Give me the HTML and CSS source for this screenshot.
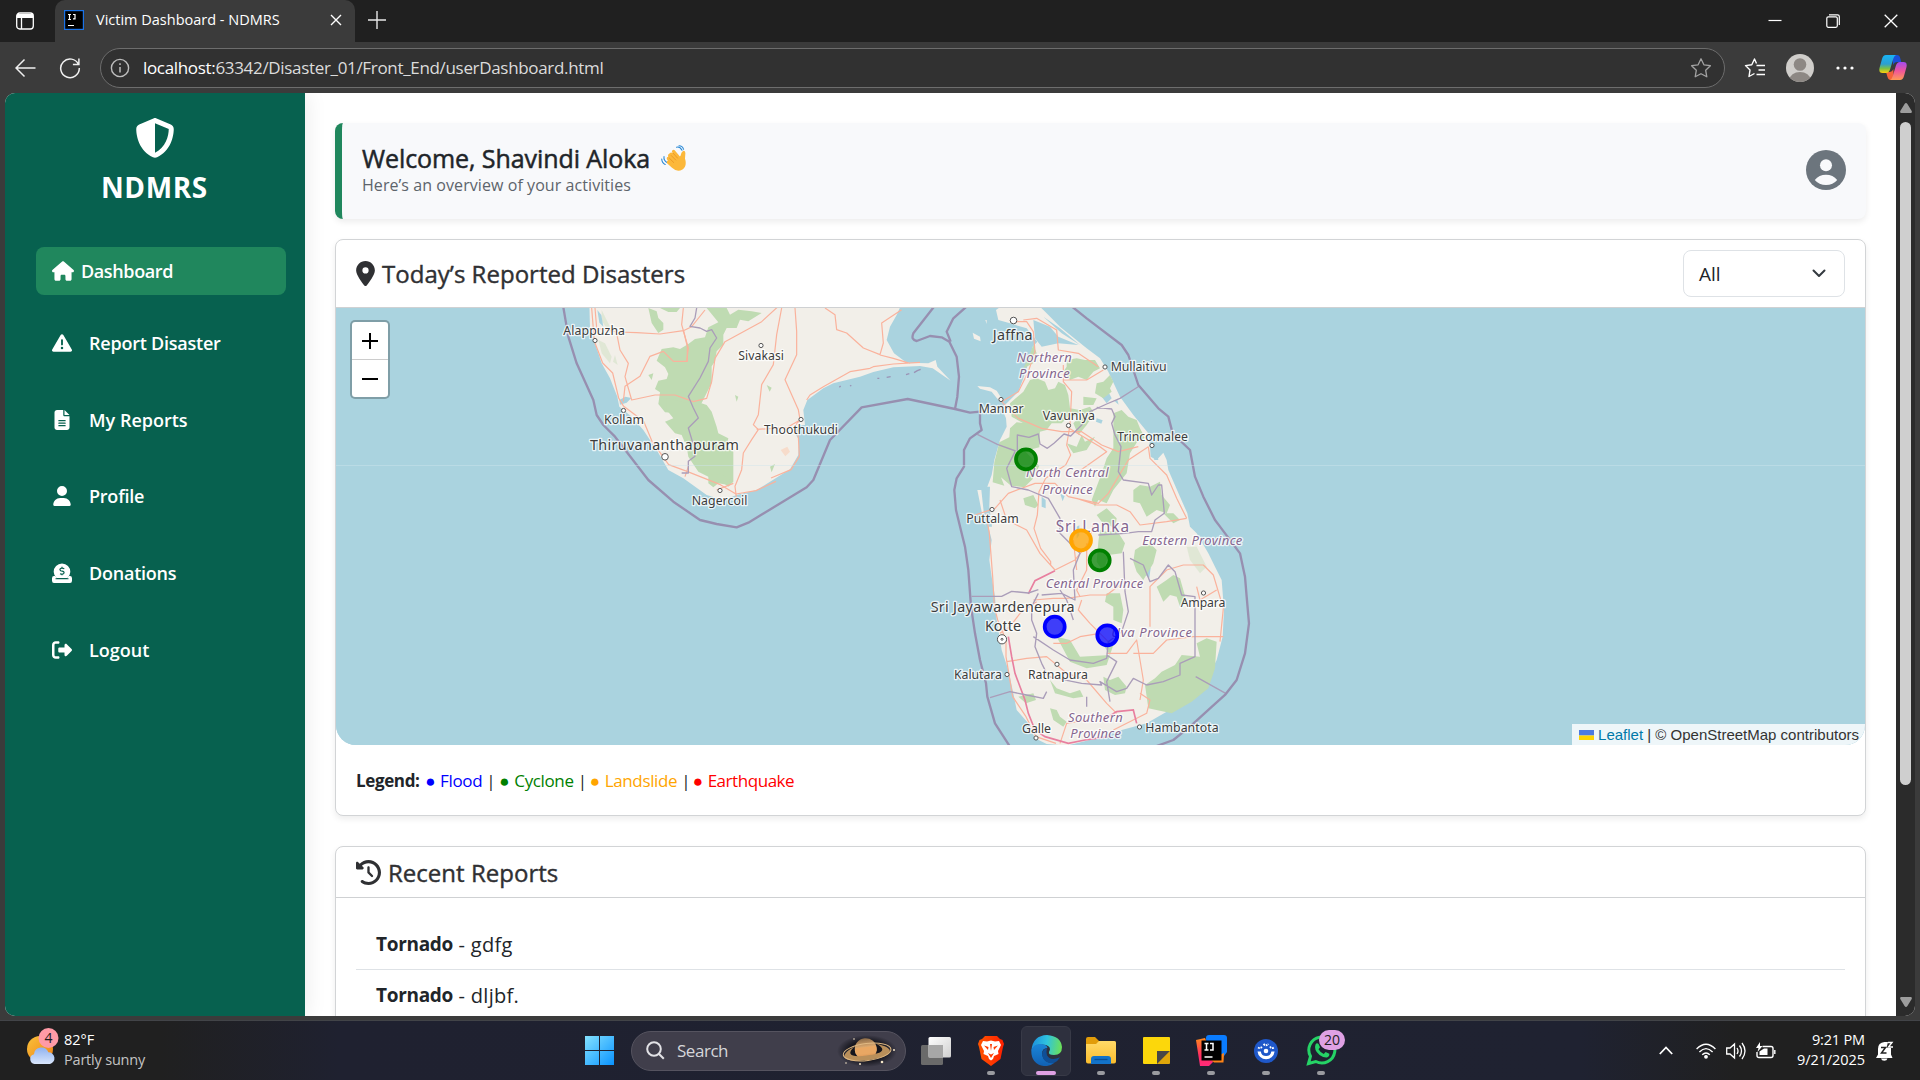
FILE: index.html
```html
<!DOCTYPE html>
<html lang="en">
<head>
<meta charset="utf-8">
<title>Victim Dashboard - NDMRS</title>
<link rel="stylesheet" href="styles.css">
</head>
<body>
<div class="tabbar">
  <svg class="tab-menu" width="20" height="20" viewBox="0 0 20 20" fill="none" stroke="#fff" stroke-width="1.3"><rect x="1.7" y="2" width="16.6" height="16" rx="3"/><path d="M2 5h16" stroke-width="4"/><path d="M6.5 6v12"/></svg>
  <div class="tab">
    <svg width="20" height="20" viewBox="0 0 20 20"><rect x=".6" y=".6" width="18.8" height="18.8" fill="#000" stroke="#1a73e8" stroke-width="1.2"/><path d="M4 4.500h3M5.500 4.500v5M4 9.500h3M9 4.500h2v4.300h-2M4 15.500h6" stroke="#fff" stroke-width="1.200" fill="none"/></svg>
    <span class="tab-title">Victim Dashboard - NDMRS</span>
    <svg class="tab-close" width="12" height="12" viewBox="0 0 12 12" stroke="#fff" stroke-width="1.4"><path d="M1 1l10 10M11 1L1 11"/></svg>
  </div>
  <svg class="tab-new" width="18" height="18" viewBox="0 0 18 18" stroke="#e8e8e8" stroke-width="1.4"><path d="M9 0v18M0 9h18"/></svg>
  <div class="window-buttons">
    <svg width="14" height="14" viewBox="0 0 14 14" stroke="#fff" stroke-width="1.2"><path d="M.5 6.500h13"/></svg>
    <svg width="14" height="14" viewBox="0 0 14 14" fill="none" stroke="#fff" stroke-width="1.2"><rect x=".8" y="2.800" width="10.500" height="10.500" rx="1.500"/><path d="M3 .8h8.500q1.800 0 1.800 1.800V11"/></svg>
    <svg width="14" height="14" viewBox="0 0 14 14" stroke="#fff" stroke-width="1.3"><path d="M.7.7l12.600 12.600M13.300.7L.7 13.300"/></svg>
  </div>
</div>
<div class="toolbar">
  <svg width="21" height="20" viewBox="0 0 21 20" fill="none" stroke="#f0f0f0" stroke-width="1.500"><path d="M20.500 10H1M9.500 1.500L1 10l8.500 8.500"/></svg>
  <svg class="reload" width="22" height="22" viewBox="0 0 22 22" fill="none" stroke="#f0f0f0" stroke-width="1.500"><path d="M19.500 7.500A9.300 9.300 0 1 0 20.300 11M19.900 1.500v6h-6"/></svg>
  <div class="address">
    <svg width="20" height="20" viewBox="0 0 20 20" fill="none" stroke="#bdbdbd" stroke-width="1.400"><circle cx="10" cy="10" r="8.600"/><path d="M10 9v5.500M10 5.300v1.800" stroke-width="1.500"/></svg>
    <span class="url"><b>localhost:</b>63342/Disaster_01/Front_End/userDashboard.html</span>
    <svg class="fav" width="22" height="22" viewBox="0 0 22 22" fill="none" stroke="#a3a3a3" stroke-width="1.300" stroke-linejoin="round"><path d="M11 1.800l2.900 6 6.500.9-4.700 4.600 1.100 6.500L11 16.700l-5.800 3.100 1.100-6.500L1.600 8.700l6.500-.9z"/></svg>
  </div>
  <svg class="fav-list" width="22" height="22" viewBox="0 0 22 22" fill="none" stroke="#fff" stroke-width="1.400" stroke-linejoin="round"><path d="M12.500 6.500L10.500 2 7.800 7.700l-6.300.9 4.500 4.500-1 6.400L10.500 16.500M12.500 8.500H21M14.500 13H21M12.500 17.500H21"/></svg>
  <svg class="profile" width="28" height="28" viewBox="0 0 28 28"><clipPath id="pc"><circle cx="14" cy="14" r="14"/></clipPath><g clip-path="url(#pc)"><rect width="28" height="28" fill="#d0cecb"/><circle cx="14" cy="10.500" r="6.300" fill="#8d8884"/><ellipse cx="14" cy="26" rx="10.500" ry="8" fill="#8d8884"/></g></svg>
  <svg class="more" width="18" height="4" viewBox="0 0 18 4" fill="#fff"><circle cx="2" cy="2" r="1.600"/><circle cx="9" cy="2" r="1.600"/><circle cx="16" cy="2" r="1.600"/></svg>
  <svg class="copilot" width="28" height="27" viewBox="0 0 28 27"><defs><linearGradient id="cpa" x1="0" y1="0" x2="0" y2="1"><stop offset="0" stop-color="#18b4f5"/><stop offset=".5" stop-color="#2c9fd0"/><stop offset=".75" stop-color="#7cc144"/><stop offset="1" stop-color="#ffd00b"/></linearGradient><linearGradient id="cpb" x1="0" y1="0" x2="0" y2="1"><stop offset="0" stop-color="#a34bf0"/><stop offset=".5" stop-color="#f0559b"/><stop offset="1" stop-color="#ff9a55"/></linearGradient></defs><path d="M13 1h5q2.500 0 3.200 3l1 4h-4q-3 0-4 3z" fill="#1a4fd8"/><path d="M7 18l3.300 0q3 0 4-3l.5 11h-3q-2.500 0-3.300-3z" fill="#f4633a"/><path d="M7 1h10q-2 1-2.800 4l-3 10q-1.200 4-4.200 4H3.500Q-.5 19 .5 14L3 5q1-4 4-4z" fill="url(#cpa)"/><path d="M21 26H11q2-1 2.800-4l3-10q1.200-4 4.200-4h3.500q4 0 3 5l-2.500 9q-1 4-4 4z" fill="url(#cpb)"/></svg>
</div>

<div class="webview">
  <nav class="sidebar">
    <svg class="brand-icon" width="40" height="40" viewBox="0 0 512 512" fill="#fff"><path d="M256 0c4.600 0 9.200 1 13.400 2.900L457.700 82.800c22 9.300 38.400 31 38.300 57.200c-.5 99.200-41.300 280.700-213.600 363.200c-16.700 8-36.100 8-52.800 0C57.300 420.700 16.500 239.200 16 140c-.1-26.200 16.300-47.900 38.300-57.200L242.700 2.900C246.800 1 251.400 0 256 0zm0 66.800V444.800C394 378 431.100 230.100 432 141.400L256 66.800z"/></svg>
    <div class="brand">NDMRS</div>
    <a class="nav-item active"><svg width="22" height="20" viewBox="0 0 576 512"><path d="M575.800 255.500c0 18-15 32.100-32 32.100h-32l.7 160.200c0 2.700-.2 5.400-.5 8.100V472c0 22.100-17.900 40-40 40H392c-22.100 0-40-17.900-40-40V384c0-17.700-14.300-32-32-32H256c-17.700 0-32 14.300-32 32v88c0 22.100-17.900 40-40 40H104c-22.100 0-40-17.900-40-40V287.600H32c-18 0-32-14-32-32.100c0-9 3-17 10-24L266.400 8c7-7 15-8 22-8s15 2 21 7L564.800 231.500c8 7 12 15 11 24z"/></svg><span>Dashboard</span></a>
    <a class="nav-item"><svg width="20" height="20" viewBox="0 0 512 512"><path d="M256 32c14.200 0 27.300 7.500 34.500 19.800l216 368c7.300 12.400 7.300 27.700 .2 40.100S486.300 480 472 480H40c-14.300 0-27.600-7.700-34.700-20.100s-7-27.800 .2-40.100l216-368C228.700 39.500 241.800 32 256 32zm0 128c-13.300 0-24 10.700-24 24V296c0 13.300 10.700 24 24 24s24-10.700 24-24V184c0-13.300-10.700-24-24-24zm32 224a32 32 0 1 0 -64 0 32 32 0 1 0 64 0z"/></svg><span>Report Disaster</span></a>
    <a class="nav-item"><svg width="20" height="20" viewBox="-64 0 512 512"><path d="M64 0C28.700 0 0 28.700 0 64V448c0 35.300 28.700 64 64 64H320c35.300 0 64-28.700 64-64V160H256c-17.700 0-32-14.300-32-32V0H64zM256 0V128H384L256 0zM112 256H272c8.800 0 16 7.200 16 16s-7.200 16-16 16H112c-8.800 0-16-7.200-16-16s7.200-16 16-16zm0 64H272c8.800 0 16 7.200 16 16s-7.200 16-16 16H112c-8.800 0-16-7.200-16-16s7.200-16 16-16zm0 64H272c8.800 0 16 7.200 16 16s-7.200 16-16 16H112c-8.800 0-16-7.200-16-16s7.200-16 16-16z"/></svg><span class="even">My Reports</span></a>
    <a class="nav-item"><svg width="20" height="20" viewBox="-32 0 512 512"><path d="M224 256A128 128 0 1 0 224 0a128 128 0 1 0 0 256zm-45.700 48C79.800 304 0 383.800 0 482.300C0 498.700 13.300 512 29.700 512H418.300c16.400 0 29.700-13.300 29.700-29.700C448 383.800 368.200 304 269.700 304H178.300z"/></svg><span>Profile</span></a>
    <a class="nav-item"><svg width="20" height="20" viewBox="0 0 20 20"><path d="M4.500 15A8.300 8.300 0 1 1 15.500 15z"/><path d="M0 15.200Q0 13 2 13h1.300l1.400 2.200H3.500v1h13v-1h-1.200l1.400-2.200H18q2 0 2 2.200v2.600Q20 20 18 20H2q-2 0-2-2.200z"/><path d="M12.300 5.700Q10 4.700 8.600 5.500T8.700 7.700l2.300.7q1.700.8.700 2.100T8 10.700M10 3.800v1.300M10 11v1.300" fill="none" stroke="#07614f" stroke-width="1.200"/></svg><span>Donations</span></a>
    <a class="nav-item"><svg width="20" height="20" viewBox="0 0 512 512"><path d="M377.900 105.900L500.700 228.700c7.200 7.200 11.300 17.100 11.300 27.300s-4.100 20.100-11.300 27.300L377.900 406.100c-6.400 6.400-15 9.900-24 9.900c-18.700 0-33.900-15.200-33.900-33.900l0-62.100-128 0c-17.700 0-32-14.300-32-32l0-64c0-17.700 14.300-32 32-32l128 0 0-62.100c0-18.700 15.200-33.900 33.900-33.900c9 0 17.600 3.600 24 9.900zM160 96L96 96c-17.700 0-32 14.300-32 32l0 256c0 17.700 14.300 32 32 32l64 0c17.700 0 32 14.300 32 32s-14.300 32-32 32l-64 0c-53 0-96-43-96-96L0 128C0 75 43 32 96 32l64 0c17.700 0 32 14.300 32 32s-14.300 32-32 32z"/></svg><span class="even">Logout</span></a>
  </nav>
  <main class="content">
    <section class="welcome">
      <div>
        <h1><span>Welcome, Shavindi Aloka</span>
          <svg width="26" height="26" viewBox="0 0 26 26"><g fill="none" stroke="#2b8ad6" stroke-width="1.100" stroke-linecap="round"><path d="M15.500 2.200q3.500-.8 5.500 3M18 .8q3.500 0 4.600 3.500M3 11.500q-.5 4 3 6M.7 14q.3 4 3.500 5.500"/></g><path d="M8.500 8.500q1.500-2 3.200-.3l-.9-1.700q.6-2.400 2.900-1.300l4.600 5.600q.4 1.100 1.200 0 .6-3.700 2.700-5 2.200 0 2.200 2.200l-.4 5.500q2.300 7.500-2.500 11-5.500 3-10.500-1.700L6 18.200q-.8-2 .9-2.400L6 14.500q-.9-2.200 1.200-2.800L7 10.500q.1-1.400 1.500-2z" fill="#fcb83a"/><path d="M10 10.300l5 5M8.200 13l4.800 4.800M12 8l4.800 5.400" stroke="#e58e1c" stroke-width=".7"/></svg></h1>
        <p class="sub">Here’s an overview of your activities</p>
      </div>
      <svg class="account" width="40" height="40" viewBox="0 0 40 40"><circle cx="20" cy="20" r="20" fill="#6c757d"/><circle cx="20" cy="15.300" r="6" fill="#f8f9fb"/><path d="M8.800 30Q13 24.800 20 24.800T31.200 30Q27 35 20 35T8.800 30z" fill="#f8f9fb"/></svg>
    </section>

    <section class="card">
      <header class="card-head map-head">
        <svg width="19" height="25" viewBox="0 0 384 512" fill="#2f3033"><path d="M215.700 499.200C267 435 384 279.400 384 192C384 86 298 0 192 0S0 86 0 192c0 87.400 117 243 168.300 307.200c12.300 15.300 35.100 15.300 47.400 0zM192 128a64 64 0 1 1 0 128 64 64 0 1 1 0-128z"/></svg>
        <h2>Today’s Reported Disasters</h2>
        <div class="select"><span>All</span><svg width="14" height="9" viewBox="0 0 14 9" fill="none" stroke="#343a40" stroke-width="2" stroke-linecap="round" stroke-linejoin="round"><path d="M1.500 1.500L7 7l5.500-5.500"/></svg></div>
      </header>
      <div class="map">
        <svg class="map-canvas" width="1529" height="437" viewBox="336 308 1529 437">
          <rect x="336" y="308" width="1529" height="437" fill="#aad3df"/>
          <!-- southern India -->
          <g transform="translate(540 300) scale(.33333)">
            <path class="land" d="M148 0L150 90 165 130 185 190 210 235 232 290 238 320 275 350 310 390 350 450 385 510 430 535 500 585 550 600 590 585 650 570 690 545 750 508 775 465 777 420 765 400 775 375 795 375 790 330 802 300 850 265 880 250 960 230 1000 216 1060 202 1140 198 1178 205 1232 242 1192 200 1187 180 1165 190 1100 188 1062 160 1040 120 1050 80 1070 45 1090 0z"/>
            <g class="forest">
              <path d="M325 24l25 10 5 20 15 15 0 20-15 10-20-30zM360 24l60 0-10 12-25 0zM500 24l60 0 10 20 25-15 40 5 30 5-40 25-25-5-10 25-30 0-10 20 0 30-20 20-5 30-10 15 0 50-30 60-40 45-20 0-20-15-30-2-20-25 5-35-15-10 10-25 25-5 5-15-10-20-25-20 15-35 35-5 20 5 25-15 20-15 30-5 10-30 30-15z"/>
              <path d="M380 295l60 15 15-10 45 15 15 20 15 45 5 20 30 15-5 25 20 15 0 90-15 15-25-20-35-10-30-15-30-45-5-30-15-35-20-5-30-35 25-10-20-25z"/>
              <path d="M505 520l20 5 15-5 30 20-5 15-30-5-15 12-15-12zM325 225l15-5-5 20zM585 285l10 5-5 15zM680 255l15 8-6 12zM690 500l15-8-10 25z"/>
              <path d="M175 120l20 10 20 40-5 20-25-30zM185 30l25 50 15 15-20-3-20-30zM225 165l8 30-14-10z" opacity=".35"/>
            </g>
            <path class="road" d="M430 90l12 50 0 45"/>
            <path d="M722 450l20-10 8 15-14 14z" fill="#f7dccb"/>
            <path d="M238 300l18-10 18 4-14 14-20 6zM172 30l12 15 6 35-12-12z" fill="#aad3df"/>
            <g class="road">
              <path d="M155 24l8 100 25 65 30 30 18 75 15 25 60 45 25 60 50 70 55 20 100 40 47 28 60-10 60-28"/>
              <path d="M165 24l5 60 60 12 60 2 70 4 70-10 25-12 40-50M430 24l-5 50 20 70-5 40-40 0-30-30-40 15-30 60-45 30-5 45M230 100l10 50 25 40-10 40 20 70 70-15 60 0 55 20 40-10 15-50 10-70 30-50 110-60 65-60 25-20"/>
              <path d="M725 24l-15 80-10 90-35 60-10 90-15 30 15 15-20 30-25 40-5 50-20 50 5 40M765 24l5 70 0 70-35 75 40 90 5 30-15 20 10 30 3 60-25 40-60 25M650 388l90-5 35-20M800 300l10-15 40-25 80-45 60-10 10-5 60-8 80-5M855 24l30 20 5 45 30 10 50 45 50 20 10-35-5-60 60-40M1020 165l40 10 50 15M435 530l10-30 0 0M530 570l50-20"/>
            </g>
            <path class="prov" d="M470 24l-5 30-15 25 30 5 20 10 15-5 15 25-20 30-5 40-25 50-35 55 15 35 15 30-30 30 15 50 5 35-20 15 0 35-20 0"/>
            <path class="isle" d="M898 262l4-4M930 258l4-2M1012 235l6 0M1040 232l12-2M1098 224l10-3M1122 218l10-6 10-4"/>
          </g>
          <!-- Sri Lanka -->
          <g transform="translate(900 300) scale(.33333)">
            <path class="land" d="M288 30L330 0 400 0 440 40 480 80 560 145 600 175 625 215 660 290 700 345 745 400 750 440 752 470 770 480 790 458 800 480 805 510 840 590 862 640 870 680 890 700 925 760 945 800 965 840 972 930 968 1010 950 1080 915 1150 860 1200 800 1235 740 1270 640 1297 560 1322 500 1337 440 1332 405 1315 385 1270 350 1230 340 1180 325 1110 305 1050 290 960 285 890 275 830 268 780 275 720 265 680 258 630 262 560 275 525 283 480 300 420 320 380 318 355 305 325 355 275 370 235 385 190 398 140 412 125 380 85 330 70 295 60z"/>
            <path class="land" d="M232 258L270 262 290 272 308 300 300 306 275 275 240 266zM218 98l22 12 2 14-20-8zM232 570l12 0 12 110-10-40zM256 60l4 0 0 12z"/>
            <path class="water" d="M400 60l50 20 25 30 60 25-60-5-50 10-20-25zM430 50l50 35 60 50-55-35zM605 290l20-15 10 20-15 15zM258 560l12 0-2 60 8 60-10 0-10-50zM755 450l15 0 5 30-12 0zM640 300l12 0 4 14zM425 590l12 10 0 25-12-5zM480 580l14 8-6 16zM530 680l8-4 0 30-8 10zM738 800l14 4-4 30-12-10zM590 355l18 6-4 10-16-6z"/>
            <g class="forest">
              <path d="M400 135l10 25-10 30-30 15 15-30z"/>
              <path d="M500 180l30-5 25 5 30 0 15 25-20 10-20 25-25-10-25 10-20-25 10-15zM370 275l20-35 20-5 25 10 10 25 20-5 10-20 20 10 10 30 5 40 30 5-10 20-20-5-25 25-30 0-15 20-20 5-40-5-10-20-35-20-5-40zM590 250l20-5 20-20 10 20-10 20 5 10-25 20-25-15zM550 290l40 5-10 20-30 0zM540 330l30-10 10 15-30 20z"/>
              <path d="M330 385l20-18 50 5 20 20-2 50-20 5-20 10 40 40-20 40-25 25-40-5-30-25 10 25-35-10 5-60 15-60 30-15z"/>
              <path d="M500 430l30 10 15-35 10 20 30-15-25 40-40 10zM520 370l30-30 30 5-20 30-25 30z"/>
              <path d="M640 340l25-10 20 20 25 10 10 25 15 30-20 5-25 40-10 60-40 50-20 40-25-10-10 20-10-20 30-80 15-45 20-30 0-60zM700 570l20-15 30 5 30-15 5 40 25 30-10 25-30-10-30 20-20-40-20-5zM590 645l30-20 30 30-5 30-40-20zM790 640l30 0 20 20-20 10z"/>
              <path d="M600 690l20 5 30-5 25 40-10 30-40 5-15 50-20-30 5-60zM705 750l15-10 30-10 20 20-10 40-30 50-20-25-10-30zM620 880l40 0 10 50-5 40-25-10 0-40-25-15zM370 595l30-10 15 30-10 10-30-10z"/>
              <path d="M770 860l30-20 20-15 20 10 20 70-20 15-10-30-20-5-20 20zM890 1030l30-15 30 10-5 80-20 60-50 40-60 35-70-15-10-70 30-20 20-20 40-20 20-30 55 5z"/>
              <path d="M470 1010l40 10 30 50 90-5-20-30 30 0-20 60-60 10-50-20zM610 1130l20 10 25-10 25 30-5 20-30 5-30-15zM450 1140l20 25 40 15 30-10 10 20-30 5-55-15zM450 1225l20 5 10 20 20 15-10 15-30-20zM355 1190l45-10 8 20-30 10z"/>
              <path d="M860 740l30 0 30 60-20 20-30-40z" opacity=".35"/>
            </g>
            <g class="road">
              <path d="M340 65l40 0 20 30 5 60-20 60-30 60-50 30 50 50 70 30 60 10 60 0 60 40 50 20 60-15M370 60l40-5 60 35 5 60 60 10 60 40M490 195l0 50 25 30-5 100-10 60 12 30-15 30-60 40-20 40-5 70-10 40 20 60 30 40 0 10M490 240l70 0 50-30M500 380l100 60 20 15-70 50-30 20M745 440l-60 40-60 100-30 30-90-20-40-40-60 0-80 30-40 45-60 20M530 595l60 20 60 0 40 20 30 40 80-10 60-10M745 440l5 35 50 50 30 70 30 60M300 600l20 60 60 30 40 70 45 50"/>
              <path d="M258 640l10 60 10 130 5 90 10 40 25 60 0 50 20 120 40 60 30 60 60 20M465 810l60-30 40-50 15-60M400 900l60-5 40 0 70-10 50 0 40-30M300 1000l30-20 30-40 50-35M320 1085l60-10 60-5 60 50 60 20 60 70 30 30M545 900l-10 30 35 40 30 30 30 30M460 1030l40 0 40-20 60-10M560 730l0 80-30 60 10 20M620 1060l60 0 30-40 20 120-10 60M700 1060l60 0 40-40 80-10 90 0M750 980l0-120 50-50 50-15 60 0 30 30 30 100-10 100M480 1330l20-60 60-10M520 720l10 90M890 860l10 40 50-30M640 1290l100-50 10-40-30-20"/>
            </g>
            <path d="M465 812l-60 30-20 40M325 1010l10 60 10 50 30 80 10 40 20 50 30 20 70 20 50-10 70-10M610 1260l40-25 50-5 10 40" fill="none" stroke="#e87f9f" stroke-width="5"/>
            <g class="prov">
              <path d="M232 403L292 433 347 453M352 455L352 405 387 412 415 402 420 432 442 445 462 430 492 402 512 408 545 375 570 335 620 312 660 295 718 258M590 322l45 5 10 23-10 20 10 35 18 35-8 75 15 25 75 10 10 35 20-30 10 0 8 85-28 20-10 35-40 0-40 5-80 5M345 455l-25 50 15 55 50 10 60 25 35 60M480 655l0 45 60 60-20 50 5 90-40-20-60 5M215 889l90 0 30-15 50 5 30-10M415 880l-20 40 0 40 15 40-5 40 20 50 20 40 100 20 60 5-5-10 50 30 30-10 20-30 40 20 50-10 50-20 0-35 45-20 0-180-40-5-20-70-20-20-30 40-25 10-20-50-40-20M670 755l5 120 10 60-20 60-40 30-5 50-40 15-70-10-50-30-60-40M620 1065l30 20-30 60 10 60M270 1193l60-18 50 10 50 10 10-20M887 1130l90 50M560 1190l0 30M480 870l20 30 20 60"/>
            </g>
          </g>
          <!-- maritime limits -->
          <g class="sea-limit" transform="translate(540 300) scale(.33333)">
            <path d="M68 10L85 110 110 190 160 300 170 345 190 375 225 410 325 540 400 605 480 660 530 672 590 682 625 668 800 562 820 540 870 420 965 322 1103 297 1245 327 1290 338 1320 335 1320 370 1325 390 1290 415 1272 450 1272 500 1250 535 1243 570 1248 630 1265 700 1275 740 1285 810 1293 920 1305 1000 1320 1080 1338 1150 1342 1190 1365 1270 1410 1340"/>
            <path d="M1190 10L1120 100Q1112 120 1130 123L1170 108 1205 112 1228 125 1250 170 1257 230 1252 290 1245 327M1285 15L1240 55 1220 95 1232 125"/>
            <path d="M1590 15L1640 55 1745 135 1765 165 1795 255 1855 325 1885 350 1898 400 1950 450 1965 530 1990 590 2025 660 2040 680 2100 760 2115 830 2120 890 2127 970 2115 1060 2090 1140 2055 1185 2010 1225 1950 1280 1900 1320 1845 1340"/>
          </g>
          <path d="M336 465.500h1529" stroke="#cfe6ed" stroke-width="1" opacity=".45"/>
          <g class="town"><circle cx="595" cy="340.500" r="2.100"/><circle cx="761" cy="345.500" r="2.100"/><circle cx="623.500" cy="410.500" r="2.100"/><circle cx="801" cy="419.500" r="2.100"/><circle cx="665" cy="456.800" r="3.300"/><circle cx="720" cy="490.500" r="2.100"/><circle cx="1013.500" cy="320.500" r="3.300"/><circle cx="1105" cy="367" r="2.100"/><circle cx="1001" cy="399.500" r="2.100"/><circle cx="1068.500" cy="425.500" r="2.100"/><circle cx="1152" cy="445.500" r="2.100"/><circle cx="992" cy="509.500" r="2.100"/><circle cx="1203.500" cy="593" r="2.100"/><circle cx="1002" cy="639.300" r="4.600"/><circle cx="1002" cy="639.300" r="1"/><circle cx="1007" cy="674.500" r="2.100"/><circle cx="1057" cy="664.300" r="2.100"/><circle cx="1139.500" cy="727" r="2.100"/><circle cx="1036" cy="738" r="2.100"/></g>
          <g class="place" transform="translate(540 300) scale(.33333)">
            <text x="70" y="105" textLength="185">Alappuzha</text>
            <text x="595" y="180" textLength="137">Sivakasi</text>
            <text x="192" y="372" textLength="120">Kollam</text>
            <text x="672" y="402" textLength="222">Thoothukudi</text>
            <text x="455" y="616" textLength="167">Nagercoil</text>
            <text class="city" x="150" y="449" textLength="447">Thiruvananthapuram</text>
          </g>
          <g class="place" transform="translate(900 300) scale(.33333)">
            <text class="city" x="278" y="121" textLength="120">Jaffna</text>
            <text x="632" y="212" textLength="168">Mullaitivu</text>
            <text x="236" y="340" textLength="135">Mannar</text>
            <text x="428" y="361" textLength="157">Vavuniya</text>
            <text x="652" y="424" textLength="212">Trincomalee</text>
            <text x="199" y="668" textLength="157">Puttalam</text>
            <text class="city" x="92" y="935" textLength="432">Sri Jayawardenepura</text>
            <text class="city" x="255" y="992" textLength="108">Kotte</text>
            <text x="842" y="922" textLength="134">Ampara</text>
            <text x="162" y="1137" textLength="144">Kalutara</text>
            <text x="384" y="1136" textLength="180">Ratnapura</text>
            <text x="366" y="1299" textLength="87">Galle</text>
            <text x="736" y="1297" textLength="220">Hambantota</text>
            <g class="region">
              <text class="country" x="467" y="697" textLength="220">Sri Lanka</text>
              <text x="350" y="186" textLength="165">Northern</text><text x="357" y="234" textLength="152">Province</text>
              <text x="378" y="531" textLength="248">North Central</text><text x="426" y="581" textLength="152">Province</text>
              <text x="727" y="734" textLength="300">Eastern Province</text>
              <text x="437" y="865" textLength="293">Central Province</text>
              <text x="634" y="1010" textLength="242">Uva Province</text>
              <text x="504" y="1265" textLength="164">Southern</text><text x="511" y="1314" textLength="152">Province</text>
            </g>
          </g>
          <g class="pin"><circle cx="1026" cy="459.300" r="10" fill="green" stroke="green"/><circle cx="1081" cy="540.300" r="10" fill="orange" stroke="orange"/><circle cx="1099.700" cy="560.300" r="10" fill="green" stroke="green"/><circle cx="1054.700" cy="626.700" r="10" fill="blue" stroke="blue"/><circle cx="1107.300" cy="635.300" r="10" fill="blue" stroke="blue"/></g>
        </svg>
        <div class="zoom-ctl"><div><svg width="16" height="16" viewBox="0 0 16 16" stroke="#000" stroke-width="2"><path d="M0 8h16M8 0v16"/></svg></div><div><svg width="16" height="16" viewBox="0 0 16 16" stroke="#000" stroke-width="2"><path d="M0 8h16"/></svg></div></div>
        <div class="attribution"><svg width="15" height="10" viewBox="0 0 15 10"><rect width="15" height="5.500" fill="#4c7be1"/><rect y="5.500" width="15" height="4.500" fill="#ffd500"/></svg><span><a>Leaflet</a> | © OpenStreetMap contributors</span></div>
      </div>
      <div class="legend"><b>Legend:</b> <i class="flood">● <u>Flood</u></i> | <i class="cyclone">● <u>Cyclone</u></i> | <i class="landslide">● <u>Landslide</u></i> | <i class="quake">● <u>Earthquake</u></i></div>
    </section>

    <section class="card recent">
      <header class="card-head recent-head">
        <svg width="25" height="25" viewBox="0 0 512 512" fill="#2f3033"><path d="M75 75L41 41C25.900 25.900 0 36.600 0 57.900V168c0 13.300 10.700 24 24 24H134.100c21.400 0 32.100-25.900 17-41l-30.800-30.800C155 85.500 203 64 256 64c106 0 192 86 192 192s-86 192-192 192c-40.800 0-78.600-12.700-109.700-34.400c-14.500-10.100-34.400-6.600-44.600 7.900s-6.600 34.400 7.900 44.600C151.200 495 201.700 512 256 512c141.400 0 256-114.600 256-256S397.400 0 256 0C185.300 0 121.300 28.700 75 75zm181 53c-13.300 0-24 10.700-24 24V256c0 6.400 2.500 12.500 7 17l72 72c9.400 9.400 24.600 9.400 33.900 0s9.400-24.600 0-33.900l-65-65V152c0-13.300-10.700-24-24-24z"/></svg>
        <h2>Recent Reports</h2>
      </header>
      <ul class="reports">
        <li><b>Tornado</b><span> - gdfg</span></li>
        <li><b>Tornado</b><span> - dljbf.</span></li>
      </ul>
    </section>
  </main>
  <div class="scrollbar">
    <svg width="12" height="10" viewBox="0 0 12 10" fill="#9d9d9d"><path d="M6 0q.8 0 1.400 1l4.300 7q.6 2-1 2H1.300q-1.600 0-1-2l4.300-7Q5.200 0 6 0z"/></svg>
    <div class="thumb"></div>
    <svg class="down" width="12" height="10" viewBox="0 0 12 10" fill="#9d9d9d"><path d="M6 10q.8 0 1.400-1l4.300-7q.6-2-1-2H1.300q-1.600 0-1 2l4.300 7Q5.200 10 6 10z"/></svg>
  </div>
</div>

<div class="taskbar">
  <div class="weather">
    <svg width="32" height="38" viewBox="0 0 32 38"><defs><linearGradient id="sun" x1="0" y1="0" x2="1" y2="1"><stop offset="0" stop-color="#f9c23c"/><stop offset="1" stop-color="#f07f13"/></linearGradient><linearGradient id="cl" x1="0" y1="0" x2="0" y2="1"><stop offset="0" stop-color="#8fb2f0"/><stop offset="1" stop-color="#d9e6fc"/></linearGradient></defs><circle cx="13" cy="22" r="13" fill="url(#sun)"/><path d="M7.500 37a5 5 0 0 1-.5-9.800 7.500 7.500 0 0 1 14.400-2 6 6 0 0 1 1.600 11.800z" fill="url(#cl)"/><circle cx="21.500" cy="11" r="10" fill="#ff9aa6"/><text x="21.500" y="16" text-anchor="middle" class="badge-text">4</text></svg>
    <div><div class="temp">82°F</div><div class="cond">Partly sunny</div></div>
  </div>
  <div class="dock">
    <svg class="start" width="29" height="29" viewBox="0 0 29 29"><defs><linearGradient id="win" x1="0" y1="0" x2="1" y2="1"><stop offset="0" stop-color="#84e2ff"/><stop offset="1" stop-color="#0a93ff"/></linearGradient></defs><path d="M0 0h14v14H0zM15 0h14v14H15zM0 15h14v14H0zM15 15h14v14H15z" fill="url(#win)"/></svg>
    <div class="search">
      <svg width="19" height="19" viewBox="0 0 19 19" fill="none" stroke="#e2e2e6" stroke-width="2"><circle cx="8" cy="8" r="6.800"/><path d="M12.800 12.800l5 5"/></svg>
      <span>Search</span>
      <svg class="saturn" width="60" height="32" viewBox="0 0 60 32"><defs><radialGradient id="spc"><stop offset=".6" stop-color="#15151d"/><stop offset="1" stop-color="#15151d" stop-opacity="0"/></radialGradient><linearGradient id="pl" x1="0" y1="0" x2="0" y2="1"><stop offset="0" stop-color="#8a6a48"/><stop offset=".5" stop-color="#f0b878"/><stop offset="1" stop-color="#d98a45"/></linearGradient></defs><ellipse cx="30" cy="16" rx="30" ry="16" fill="url(#spc)"/><g transform="rotate(-7 30 16)"><circle cx="29" cy="14" r="11" fill="url(#pl)"/><path d="M18.500 10C2 16 1 25 30 25S58 16 40 10C50 17 46 20.500 29 20.500S9 16 18.500 10z" fill="#b98f5a"/><ellipse cx="30" cy="17" rx="24" ry="8.500" fill="none" stroke="#e0b983" stroke-width="1"/><path d="M18.500 12h21v5q-10 4-21 0z" fill="#e9a763"/></g><g fill="#f5e6c8"><circle cx="17" cy="4" r=".8"/><circle cx="57" cy="15" r="1"/><circle cx="45" cy="27" r="1.300"/><circle cx="23" cy="29" r="1"/><circle cx="9" cy="28" r=".8"/></g></svg>
    </div>
    <div class="app"><svg width="30" height="28" viewBox="0 0 30 28"><defs><linearGradient id="tv" x1="0" y1="0" x2="1" y2="1"><stop offset="0" stop-color="#fff"/><stop offset="1" stop-color="#cfcfcf"/></linearGradient></defs><rect y="8" width="22" height="20" rx="1.500" fill="#6a6a6a"/><rect x="7.500" width="22.500" height="20.500" rx="1.500" fill="url(#tv)"/><path d="M7.500 8H22v12.500H7.500z" fill="#a7a7a7"/></svg></div>
    <div class="app run"><svg width="26" height="31" viewBox="0 0 26 31"><defs><linearGradient id="br" x1="0" y1="0" x2="1" y2="0"><stop offset="0" stop-color="#ff5500"/><stop offset="1" stop-color="#ff1f00"/></linearGradient></defs><path d="M7 1h12l3 3 2.500 1 1.500 4-1 3-2.500 12L13 31 3.500 24 1 12 0 9l1.500-4L4 4z" fill="url(#br)"/><path d="M5 6l4 .5L13 5.500l4 1L21 6l2 4-3 6 .5 3-4.500 2-1 3-2 1.500L11 24l-1-3-4.500-2 .5-3-3-6z" fill="#fff"/><path d="M6 10.500l4.500 1.500-.5 3zM20 10.500L15.500 12l.5 3zM10 18l3 1.500 3-1.500-3 5zM12 9h2l-1 7z" fill="#ff3a00"/></svg></div>
    <div class="app run active"><svg width="31" height="31" viewBox="0 0 31 31"><defs><linearGradient id="ed1" x1="0" y1=".3" x2="1" y2=".4"><stop offset="0" stop-color="#1c8fdd"/><stop offset=".5" stop-color="#2fc3df"/><stop offset="1" stop-color="#6be05a"/></linearGradient><linearGradient id="ed2" x1="0" y1="0" x2="0" y2="1"><stop offset="0" stop-color="#1b86d8"/><stop offset="1" stop-color="#1161b4"/></linearGradient></defs><path d="M.5 15Q2 .5 16 0 30 1 31 12q0 8-8 8-6 0-5-3 3-5-3-7Q5 8 .5 15z" fill="url(#ed1)"/><path d="M.3 15Q3 8 10 9q6 .5 6.500 4Q11 13 11 19q1 9 12 9-4 3.500-10 3Q0 29 .3 15z" fill="url(#ed2)"/><path d="M16 13.500Q11 14 11 20q2 9 11.500 8.300 4.500-2 6.500-6-10 4-13-2-1-4 0-6.800z" fill="#0f4f97"/></svg></div>
    <div class="app run"><svg width="30" height="27" viewBox="0 0 30 27"><defs><linearGradient id="fo" x1="0" y1="0" x2="0" y2="1"><stop offset="0" stop-color="#ffd968"/><stop offset="1" stop-color="#fbbd2d"/></linearGradient></defs><path d="M0 2q0-2 2-2h7l4 4h15q2 0 2 2v6H0z" fill="#e19c0a"/><path d="M0 7h10l3-3h15q2 0 2 2v18.500q0 2-2 2H2q-2 0-2-2z" fill="url(#fo)"/><path d="M5 27v-5q0-3 3-3h14q3 0 3 3v5z" fill="#1373c9"/><path d="M8.500 22.500h13" stroke="#0a4f95" stroke-width="1.300"/></svg></div>
    <div class="app run"><svg width="27" height="27" viewBox="0 0 27 27"><path d="M0 1q0-1 1-1h25q1 0 1 1v13L14 27H1q-1 0-1-1z" fill="#fcd70b"/><path d="M14 14h13L14 27z" fill="#474747"/><path d="M27 14v12q0 1-1 1H14z" fill="#dfa60a"/></svg></div>
    <div class="app run"><svg width="31" height="31" viewBox="0 0 31 31"><defs><linearGradient id="ij" x1="0" y1="0" x2="0" y2="1"><stop offset="0" stop-color="#ff8a1c"/><stop offset=".6" stop-color="#ff2d60"/><stop offset="1" stop-color="#ff2a7a"/></linearGradient></defs><path d="M0 5l9-2 6 14 2 10-4 4H4z" fill="url(#ij)"/><path d="M10 3q0-3 3-3h15q3 0 3 3v14l-6 8-14-4z" fill="#0a7cff"/><path d="M14 24l14-6-.5 9.500H18z" fill="#ff8316"/><path d="M5.500 5.500h20v20h-20z"/><path d="M8.500 8.500h4M10.500 8.500v6.500M8.500 15h4M14 8.500h3V15h-3M8.500 22h8" stroke="#fff" stroke-width="1.500" fill="none"/></svg></div>
    <div class="app run"><svg width="24" height="24" viewBox="0 0 24 24"><circle cx="12" cy="12" r="12" fill="#1f58c9"/><path d="M3.500 12.500h3.300a5.300 5.300 0 0 0 10.500 0h3.300a8.600 8.600 0 0 1-17.100 0z" fill="#fff"/><circle cx="12" cy="12" r="2.300" fill="#fff"/><path d="M4 8.500q2.500 1.500 4-1M9.500 5q2.500 2.500 5 0M16 7.500q1.500 2.500 4 1" fill="none" stroke="#fff" stroke-width="1.800" stroke-dasharray="1.800 .8"/></svg></div>
    <div class="app run wa"><svg width="31" height="31" viewBox="0 0 31 31"><path d="M2.500 28.500l2-7.200A13 13 0 1 1 9.800 26.500z" fill="none" stroke="#25d366" stroke-width="3"/><path d="M9.500 9.500q1.500-2.500 3.200-.3l1.300 3-1.500 2q2 3.500 5.300 4.700l1.800-2 3.700 1.900q.5 2.700-2.300 3.700-3 .5-7.500-2.500-6-5-4-10.500z" fill="#25d366"/></svg><em>20</em></div>
  </div>
  <div class="tray">
    <svg width="14" height="9" viewBox="0 0 14 9" fill="none" stroke="#fff" stroke-width="1.800"><path d="M.8 8L7 1.500 13.200 8"/></svg>
    <svg class="wifi" width="20" height="16" viewBox="0 0 20 16" fill="none" stroke="#fff" stroke-width="1.400"><path d="M.6 6Q10-3.500 19.400 6M3.400 9Q10 2.300 16.600 9M6.200 11.800q3.800-3.600 7.600 0"/><circle cx="10" cy="13.800" r="1.200" fill="#fff"/></svg>
    <svg class="vol" width="20" height="18" viewBox="0 0 20 18" fill="none" stroke="#fff" stroke-width="1.300"><path d="M.7 6h3.300L8.500 2v14L4 12H.7zM11 6q2 3 0 6M13.500 3.500q4 5.500 0 11M16 1q6 8 0 16"/></svg>
    <svg class="bat" width="20" height="18" viewBox="0 0 20 18" fill="none" stroke="#fff" stroke-width="1.400"><path d="M6.500 4.500H15q2 0 2 2v7q0 2-2 2H3q-2 0-2-2V10M18.800 8v4" /><path d="M3.500 13V9.500L8 6.500h3.500V13z" fill="#fff" stroke="none"/><path d="M4 0L0 6h2.500L1.500 10 6.500 4H4z" fill="#fff" stroke="none"/></svg>
    <div class="clock"><div class="time">9:21 PM</div><div>9/21/2025</div></div>
    <svg class="bell" width="18" height="20" viewBox="0 0 18 20" fill="#fff"><path d="M2 13.500V8q0-6.500 6.500-7H12l-1.500 6H15v6.500l1.500 3.500H0zM5 17.500h6.500q-.5 2.300-3.200 2.300T5 17.500z"/><path d="M5 6.500h4.500L5.500 12h5" fill="none" stroke="#222" stroke-width="1.500"/><path d="M12 1.500h4L12.500 6H17" fill="none" stroke="#fff" stroke-width="1.400"/></svg>
  </div>
</div>
</body>
</html>
```
FILE: styles.css
```css
* { box-sizing: border-box; }
html, body { margin: 0; height: 100%; overflow: hidden; }
body {
  display: flex; flex-direction: column;
  width: 1920px; height: 1080px;
  background: #3b3b3b;
  font-family: "Open Sans", "Noto Sans", sans-serif;
  color: #212529;
}
svg { display: block; flex: none; }
span, b { white-space: pre; }

/* browser tabs */
.tabbar { display: flex; align-items: center; height: 42px; flex: none; background: #202020; padding-left: 15px; }
.tab { display: flex; align-items: center; width: 300px; height: 42px; margin-left: 20px; padding: 0 13px 2px 9px; background: #3b3b3b; border-radius: 10px 10px 0 0; color: #fff; }
.tab-title { margin: -1px 0 0 12px; font-size: 14.500px; }
.tab-close { margin-left: auto; }
.tab-new { margin-left: 13px; margin-bottom: 3px; }
.window-buttons { display: flex; gap: 44px; margin-left: auto; padding-right: 22px; }

/* browser toolbar */
.toolbar { display: flex; align-items: center; height: 51px; flex: none; padding: 0 13px 0 15px; background: #3b3b3b; }
.reload { margin-left: 23px; }
.address { display: flex; align-items: center; width: 1625px; height: 40px; margin-left: 19px; padding: 0 12px 0 9px; border: 1px solid #6d6d6d; border-radius: 20px; background: #313131; }
.url { margin-left: 13px; font-size: 17px; letter-spacing: -.325px; color: #dcdcdc; }
.url b { font-weight: 400; color: #fff; }
.fav { margin-left: auto; }
.fav-list { margin-left: 19px; }
.profile { margin-left: 20px; }
.more { margin-left: 22px; }
.copilot { margin-left: auto; }

/* page frame */
.webview { display: flex; height: 923px; flex: none; margin: 0 5px; border-radius: 10px; overflow: hidden; background: #fff; }
.sidebar { display: flex; flex-direction: column; width: 300px; flex: none; padding: 25px 19px 0 31px; background: #07614f; box-shadow: 2px 0 20px rgba(0, 0, 0, .08); color: #fff; }
.brand-icon { margin-left: 99px; }
.brand { height: 38px; margin: 10px 0 41px 65px; font-size: 28px; font-weight: 700; line-height: 39px; letter-spacing: .6px; }
.nav-item { display: flex; align-items: center; gap: 17px; height: 48px; margin-bottom: 28.700px; padding-left: 16px; border-radius: 8px; font-size: 18px; font-weight: 600; letter-spacing: -.23px; }
.nav-item .even { letter-spacing: 0; }
.nav-item svg { fill: #fff; }
.nav-item.active { gap: 7px; margin-bottom: 24px; letter-spacing: -.38px; background: #20875d; }

.content { flex: 1; height: 923px; overflow: hidden; padding: 30px 30px 0; }
.welcome { display: flex; justify-content: space-between; align-items: center; height: 96px; padding: 0 20px; border-left: 7px solid #20875d; border-radius: 8px; background: #f8f9fb; box-shadow: 0 3px 6px rgba(0, 0, 0, .075); }
.welcome h1 { display: flex; align-items: center; gap: 11px; margin: 1px 0 0; font-size: 25px; font-weight: 400; line-height: 30px; letter-spacing: -.08px; -webkit-text-stroke: .5px #212529; }
.account { margin-bottom: 2px; }
.sub { margin: 0 0 3px; font-size: 16px; line-height: 25px; letter-spacing: .07px; color: #5d646b; }

.card { margin-top: 20px; border: 1px solid #d2d4d6; border-radius: 8px; background: #fff; box-shadow: 0 3px 6px rgba(0, 0, 0, .075); }
.card-head { display: flex; align-items: center; border-bottom: 1px solid #cfd1d3; padding: 0 20px; }
.card-head h2 { margin: 0; padding-left: 7px; font-size: 24px; font-weight: 400; letter-spacing: .02px; color: #2f3033; -webkit-text-stroke: .4px #2f3033; }
.map-head { height: 68px; }
.select { display: flex; align-items: center; justify-content: space-between; width: 162px; height: 47px; margin-left: auto; padding: 0 18px 0 15px; border: 1px solid #dee2e6; border-radius: 8px; font-size: 19px; }

/* map */
.map { position: relative; height: 437px; overflow: hidden; border-radius: 0 0 20px 20px; background: #aad3df; }
.land { fill: #f2efe9; }
.water { fill: #aad3df; }
.forest { fill: #bfdbb2; }
.road { fill: none; stroke: #fab29c; stroke-width: 3.600; stroke-linejoin: round; }
.prov { fill: none; stroke: #aa9db9; stroke-width: 4; stroke-linejoin: round; }
.isle { fill: none; stroke: #9a93b5; stroke-width: 4; }
.sea-limit { fill: none; stroke: #978fb0; stroke-width: 7; stroke-linejoin: round; }
.town { fill: #fff; stroke: #555; stroke-width: 1; }
.place { font-family: "Noto Sans", sans-serif; font-size: 37px; fill: #3d3d3d; stroke: rgba(255, 255, 255, .75); stroke-width: 8; paint-order: stroke; stroke-linejoin: round; }
.city { font-size: 43px; }
.region { fill: #85668f; font-style: italic; font-size: 39px; }
.country { font-size: 46px; font-style: normal; }
.pin circle { stroke-width: 3.750; fill-opacity: .74; }
.zoom-ctl { position: absolute; left: 14px; top: 12px; width: 40px; border: 2px solid rgba(0, 0, 0, .25); border-radius: 5px; background: #fff; background-clip: padding-box; }
.zoom-ctl div { display: flex; align-items: center; justify-content: center; height: 37px; }
.zoom-ctl div:first-child { height: 38px; border-bottom: 1px solid #ccc; }
.attribution { position: absolute; right: 0; bottom: 0; display: flex; align-items: center; gap: 4px; height: 21px; padding: 0 6px 0 7px; background: rgba(255, 255, 255, .8); font: 15px/21px "Liberation Sans", sans-serif; color: #333; }
.attribution a { color: #0078a8; }

.legend { height: 70px; padding: 0 20px; font-size: 17px; line-height: 72px; letter-spacing: -.36px; white-space: nowrap; }
.legend b { font-weight: 700; }
.legend i { font-style: normal; }
.legend u { margin-left: 1px; text-decoration: none; }
.flood { margin-left: 1.500px; color: blue; }
.cyclone { color: green; }
.landslide { margin-left: -1px; color: orange; }
.quake { margin-left: -1.500px; letter-spacing: -.45px; color: red; }

.recent { height: 260px; margin-top: 30px; }
.recent-head { height: 51px; }
.reports { margin: 0; padding: 21px 20px; list-style: none; }
.reports li { display: flex; align-items: center; height: 51px; padding-left: 20px; border-bottom: 1px solid #dee2e6; font-size: 20px; letter-spacing: .3px; }
.reports b { font-size: 19px; font-weight: 700; letter-spacing: -.3px; }

.scrollbar { display: flex; flex-direction: column; align-items: center; width: 19px; flex: none; padding: 10px 0; background: #2b2b2b; }
.thumb { width: 11px; height: 663px; margin-top: 9px; border-radius: 6px; background: #cfcfcf; }
.down { margin-top: auto; margin-bottom: -1px; }

/* taskbar */
.taskbar { display: flex; align-items: center; height: 60px; flex: none; margin-top: 4px; border-top: 1px solid #424448; background: linear-gradient(90deg, #202020 0, #202020 160px, #1f2130 340px, #1f2231 1580px, #202020 1740px); font-size: 14.500px; color: #fff; }
.weather { display: flex; width: 572px; padding-left: 27px; gap: 5px; }
.weather svg { margin-top: -4px; }
.temp, .cond { height: 20px; line-height: 18px; }
.cond { letter-spacing: -.2px; color: #c4c4c4; }
.badge-text { font: 14px "Open Sans", sans-serif; fill: #1b1b1b; }
.dock { display: flex; align-items: center; }
.start { margin: 0 17px 0 13px; }
.search { display: flex; align-items: center; width: 275px; height: 40px; padding: 0 8px 0 14px; border: 1px solid #55535f; border-radius: 20px; background: #403e4b; font-size: 17px; letter-spacing: -.47px; color: #d6d6da; }
.search span { margin-left: 12px; }
.saturn { margin-left: auto; }
.app { position: relative; display: flex; align-items: center; justify-content: center; width: 50px; height: 50px; margin-left: 5px; border-radius: 6px; }
.app.active { background: #2e303e; border: 1px solid #383a47; }
.run::after { content: ""; position: absolute; left: 21px; bottom: 1px; width: 8px; height: 4px; border-radius: 2px; background: #9a9ba0; }
.run.active::after { left: 14px; bottom: 0; width: 20px; background: #dfa1e4; }
.wa em { position: absolute; left: 23px; top: 4px; width: 26px; height: 20px; border-radius: 10px; background: #dfa1e4; color: #222; font-style: normal; font-size: 14px; line-height: 20px; text-align: center; }
.tray { display: flex; align-items: center; margin-left: auto; padding-right: 26px; }
.wifi { margin-left: 23px; }
.vol, .bat { margin-left: 10px; }
.clock { width: 89px; margin-top: -2px; text-align: right; line-height: 20px; letter-spacing: -.07px; }
.clock div { height: 20px; }
.time { letter-spacing: -.17px; }
.bell { margin-left: 11px; }
```
